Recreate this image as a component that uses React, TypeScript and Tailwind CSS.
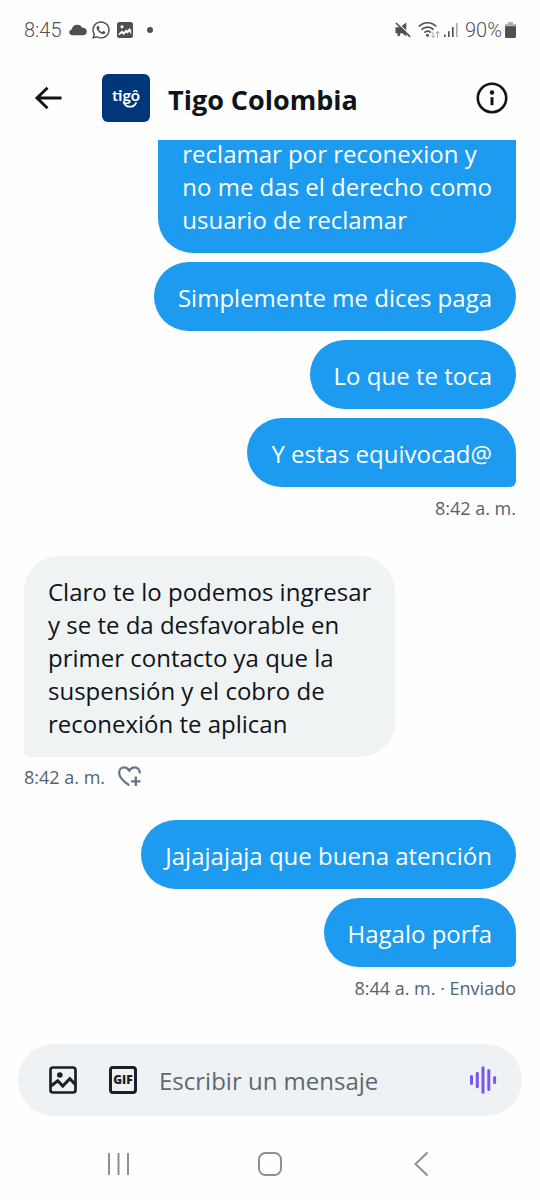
import type { ReactNode } from "react";
import { FaWhatsapp } from "react-icons/fa";

type Side = "sent" | "received";

function Bubble({ side, last = false, cut = false, children }: { side: Side; last?: boolean; cut?: boolean; children: ReactNode }) {
  const tone = side === "sent" ? "bg-[#1d9bf0] text-white self-end" : "bg-[#eff3f4] text-[#0f1419] self-start";
  const corner = last ? (side === "sent" ? "rounded-br-md" : "rounded-bl-md") : "";
  const top = cut ? "rounded-t-none" : "";
  return (
    <p className={`shrink-0 whitespace-pre-line rounded-[35px] px-6 pt-[19px] pb-[17px] text-2xl leading-[33px] ${tone} ${corner} ${top}`}>
      {children}
    </p>
  );
}

function HeartPlus() {
  return (
    <svg viewBox="0 0 24 24" className="h-6 w-6" fill="none" stroke="#657786" strokeWidth="2.200" aria-hidden="true">
      <path d="M12.200 20.200C6.600 16.600 2.100 12.700 2.100 7.800 2.100 4.400 4.500 2.400 7.200 2.400c2.400 0 3.900 1.300 5.100 3.200 1.200-1.900 2.900-3.200 5.300-3.200 3 0 5.300 2.300 5.200 6" />
      <path d="M18.800 11.600v9.400M14.100 16.300h9.400" strokeWidth="2.300" />
    </svg>
  );
}

function StatusBar() {
  return (
    <div className="flex h-15 shrink-0 items-center justify-between px-6 font-[Roboto,sans-serif] text-xl text-[#505050]">
      <div className="flex items-center">
        <span className="font-light">8:45</span>
        <svg viewBox="0 0 18 12" className="ml-2 h-3 w-[18px]" fill="#505050" aria-hidden="true">
          <path d="M3.500 11.200C1.500 11.200.2 10 .2 8.300c0-1.500 1-2.600 2.500-2.800C3.200 2.600 5.400.8 8.200.8c2.300 0 4.100 1.100 5 3 2.600-.3 4.600 1.400 4.600 3.700 0 2.100-1.500 3.700-3.700 3.700z" />
        </svg>
        <FaWhatsapp className="ml-1 h-5 w-5" aria-hidden="true" />
        <svg viewBox="0 0 16 16" className="ml-[6px] h-4 w-4" aria-hidden="true">
          <rect width="16" height="16" rx="2.500" fill="#505050" />
          <circle cx="5" cy="4.800" r="1.600" fill="#fff" />
          <path d="M1.700 11.500 5 8.400l1.800 1.500 2.300-2.400 1.500 1 2-2.500 1.700 2.600v4.200L12.500 9.600l-2 2-1.500-1.200-2.300 2.600-1.800-1.800-3.200 2.200z" fill="#fff" />
        </svg>
        <span className="ml-[14px] h-[6px] w-[6px] rounded-full bg-[#505050]" />
      </div>
      <div className="flex items-center">
        <svg viewBox="0 0 16 16" className="h-4 w-4" aria-hidden="true">
          <path d="M.5 5.200h4.500L11.300.5v14L7.300 11.300H5.500l-1 3-2.300-.6.5-2.400H.5z" fill="#505050" />
          <path d="M1.500 0 16 13.600" stroke="#fefefe" strokeWidth="1.300" />
          <path d="M1 1 15.200 14.800" stroke="#505050" strokeWidth="1.700" />
        </svg>
        <svg viewBox="0 0 22 18" className="ml-[7px] h-[18px] w-[22px]" fill="none" stroke="#505050" strokeWidth="1.700" aria-hidden="true">
          <path d="M.8 5.500c5-5 12.500-5 17.500 0M3.600 8.700c3.500-3.500 8.500-3.500 12 0M6.400 11.600c2-1.900 4.600-1.900 6.400 0" />
          <circle cx="9.500" cy="14.200" r="1.500" fill="#505050" stroke="none" />
          <path d="M15 10.500v6m-2-2 2 2 2-2M19.500 16.500v-6m-2 2 2-2 2 2" stroke="#a9a9a9" strokeWidth="1" />
        </svg>
        <svg viewBox="0 0 14 14" className="ml-1 h-[14px] w-[14px]" aria-hidden="true">
          <path d="M0 11.500h1.600V14H0zM4 8.200h1.600V14H4zM8 4h1.600v10H8z" fill="#505050" />
          <path d="M12 0h1.600v14H12z" fill="#ababab" />
        </svg>
        <span className="ml-[7px] font-light">90%</span>
        <svg viewBox="0 0 11 16" className="ml-[3px] h-4 w-[11px]" aria-hidden="true">
          <path d="M3 0h5v1.700h1.500Q11 1.700 11 3v2H0V3q0-1.300 1.500-1.300H3z" fill="#b3b3b3" />
          <path d="M0 4.300h11V14.500q0 1.500-1.500 1.500h-8Q0 16 0 14.500z" fill="#505050" />
        </svg>
      </div>
    </div>
  );
}

function Header() {
  return (
    <header className="flex h-20 shrink-0 items-center pr-8 pb-1 pl-[34px]">
      <button type="button" aria-label="Atrás">
        <svg viewBox="0 0 28 24" className="h-6 w-7" fill="none" stroke="#0f1419" strokeWidth="2.900" aria-hidden="true">
          <path d="M27.500 12H3M13.500 1.800 3 12l10.500 10.200" />
        </svg>
      </button>
      <div className="relative ml-10 flex h-12 w-12 justify-center rounded-md bg-[#00377b] pt-[11px] text-white">
        <span className="font-[Lato,sans-serif] text-base leading-5 font-bold">tigô</span>
        <svg viewBox="0 0 14 6" className="absolute top-[28px] left-[21px] h-[6px] w-[14px]" fill="none" stroke="#fff" strokeWidth="1.700" strokeLinecap="round" aria-hidden="true">
          <path d="M1 1c2.600 5 9.400 5 12 0" />
        </svg>
      </div>
      <h1 className="ml-[18px] flex-1 pt-1 text-[27px] leading-8 font-bold text-[#0f1419]">Tigo Colombia</h1>
      <button type="button" aria-label="Información">
        <svg viewBox="0 0 32 32" className="h-8 w-8" fill="none" stroke="#0f1419" strokeWidth="2.600" aria-hidden="true">
          <circle cx="16" cy="16" r="14.200" />
          <path d="M16 15.200v8" strokeWidth="3" />
          <circle cx="16" cy="10.500" r="2.200" fill="#0f1419" stroke="none" />
        </svg>
      </button>
    </header>
  );
}

function Composer() {
  return (
    <form className="mx-[18px] mb-3 flex h-18 shrink-0 items-center rounded-full bg-[#eef2f5] pr-6 pl-[31px]">
      <button type="button" aria-label="Foto">
        <svg viewBox="0 0 28 28" className="h-7 w-7" fill="none" stroke="#1b2026" strokeWidth="2.700" aria-hidden="true">
          <rect x="1.500" y="1.500" width="25" height="25" rx="2.500" />
          <path d="m2 20 6.800-5.200 5 5.200 7-7.400 6 6.400" strokeWidth="3" />
          <circle cx="10.800" cy="9" r="2.800" fill="#1b2026" stroke="none" />
        </svg>
      </button>
      <button type="button" className="ml-8 flex h-7 w-7 shrink-0 items-center justify-center rounded-sm border-[3px] border-[#1b2026] text-xs leading-none font-extrabold text-[#1b2026]">
        GIF
      </button>
      <input
        type="text"
        aria-label="Escribir un mensaje"
        placeholder="Escribir un mensaje"
        className="ml-[22px] w-0 flex-1 bg-transparent pt-[2px] text-2xl text-[#0f1419] outline-none placeholder:text-[#5f676e]"
      />
      <button type="button" aria-label="Mensaje de voz">
        <svg viewBox="0 0 30 28" className="h-7 w-[30px]" stroke="#7856f0" strokeWidth="3" strokeLinecap="round" aria-hidden="true">
          <path d="M3.500 10.500v7M9.300 7.200v13.600M15 1.800v24.400M20.800 4.500v19M26.600 11.500v5" />
        </svg>
      </button>
    </form>
  );
}

function NavBar() {
  return (
    <nav className="flex h-18 shrink-0 items-center justify-between pr-[107px] pl-[106px]">
      <button type="button" aria-label="Recientes" className="flex w-6 justify-center">
        <svg viewBox="0 0 24 24" className="h-6 w-6" stroke="#909090" strokeWidth="2" aria-hidden="true">
          <path d="M3 1v22M12.500 1v22M22 1v22" />
        </svg>
      </button>
      <button type="button" aria-label="Inicio" className="flex w-6 justify-center">
        <svg viewBox="0 0 24 24" className="h-6 w-6" fill="none" stroke="#909090" strokeWidth="2" aria-hidden="true">
          <rect x="1" y="1" width="22" height="22" rx="6.500" />
        </svg>
      </button>
      <button type="button" aria-label="Volver" className="flex w-6 justify-center">
        <svg viewBox="0 0 16 26" className="h-[26px] w-4" fill="none" stroke="#909090" strokeWidth="2" aria-hidden="true">
          <path d="M14.500 1.500 2.500 13l12 11.500" />
        </svg>
      </button>
    </nav>
  );
}

export default function App() {
  return (
    <div className="flex h-screen flex-col overflow-hidden bg-[#fefefe] font-['Open_Sans',sans-serif]">
      <StatusBar />
      <Header />
      <main className="flex min-h-0 flex-1 flex-col justify-end overflow-hidden px-6 pb-11">
        <section className="flex shrink-0 flex-col gap-[9px]">
          <Bubble side="sent" cut>{"reclamar por reconexion y\nno me das el derecho como\nusuario de reclamar"}</Bubble>
          <Bubble side="sent">Simplemente me dices paga</Bubble>
          <Bubble side="sent">Lo que te toca</Bubble>
          <Bubble side="sent" last>Y estas equivocad@</Bubble>
          <time className="self-end text-lg leading-6 text-[#536471]">8:42 a. m.</time>
        </section>
        <section className="mt-9 flex shrink-0 flex-col gap-2">
          <Bubble side="received" last>{"Claro te lo podemos ingresar\ny se te da desfavorable en\nprimer contacto ya que la\nsuspensión y el cobro de\nreconexión te aplican"}</Bubble>
          <div className="flex items-center gap-3 text-lg leading-6 text-[#536471]">
            <time>8:42 a. m.</time>
            <button type="button" aria-label="Reaccionar">
              <HeartPlus />
            </button>
          </div>
        </section>
        <section className="mt-[31px] flex shrink-0 flex-col gap-[9px]">
          <Bubble side="sent">Jajajajaja que buena atención</Bubble>
          <Bubble side="sent" last>Hagalo porfa</Bubble>
          <p className="self-end text-lg leading-6 text-[#536471]">8:44 a. m. · Enviado</p>
        </section>
      </main>
      <Composer />
      <NavBar />
    </div>
  );
}
